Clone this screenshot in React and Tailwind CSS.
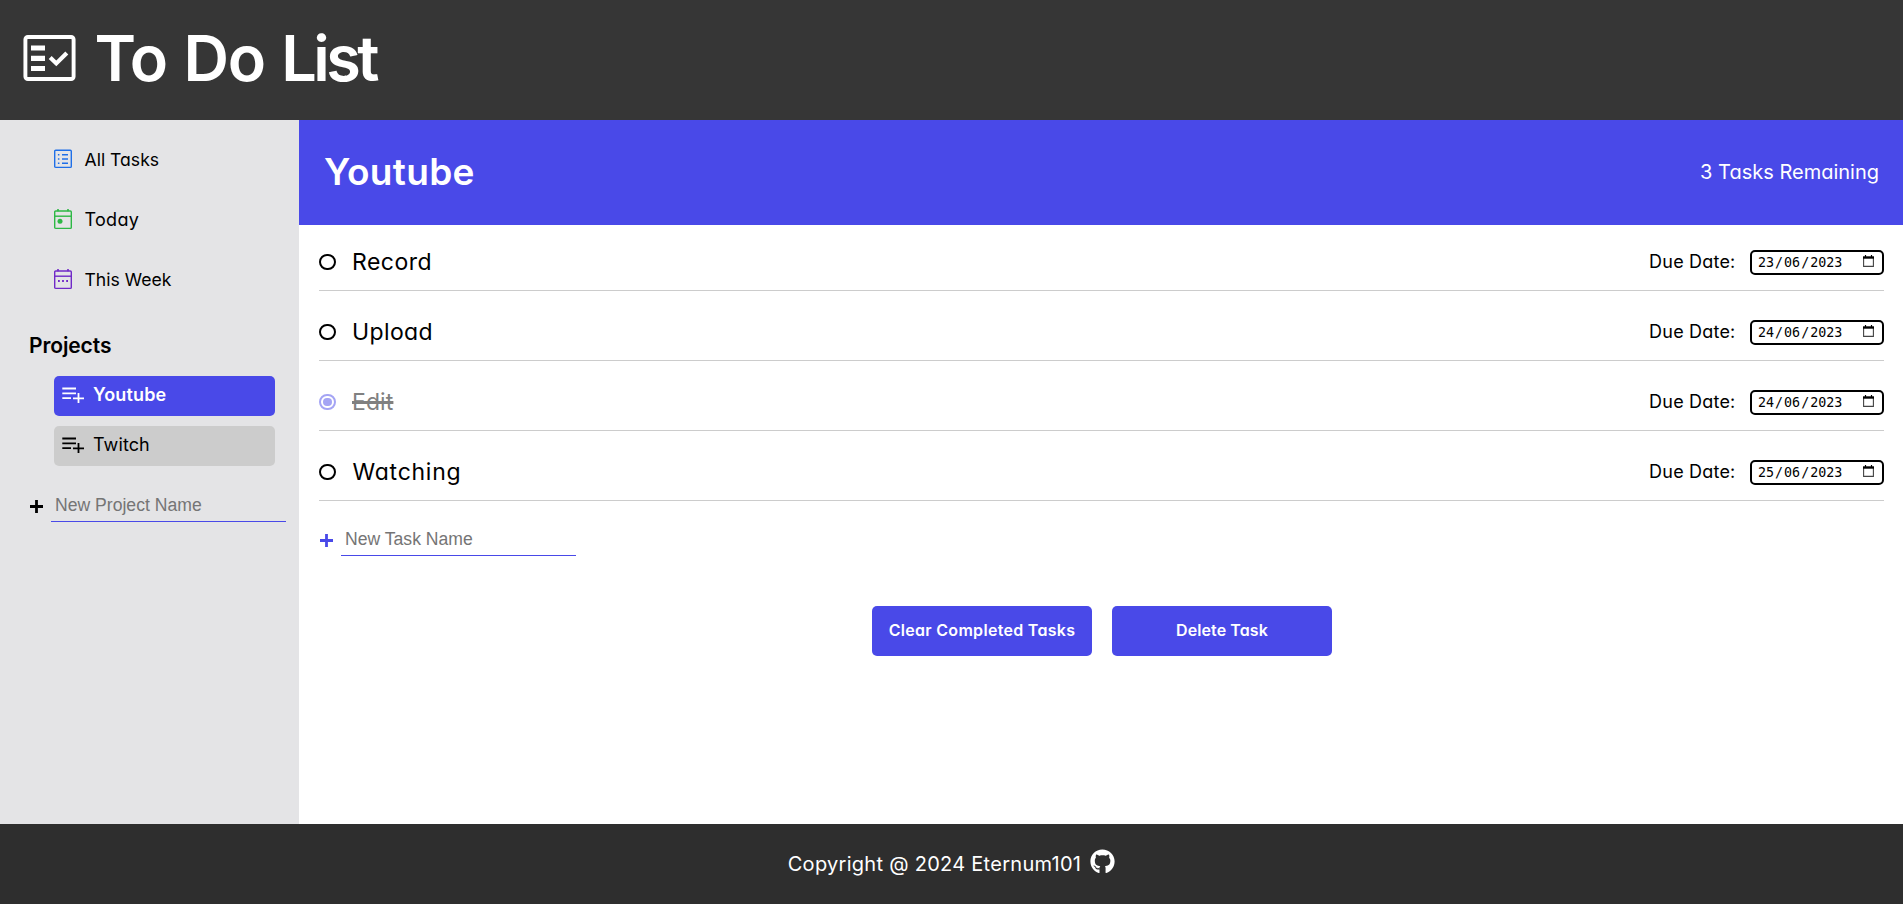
import { FaGithub } from "react-icons/fa";

function ChecklistLogo() {
  return (
    <svg width="53" height="46" viewBox="0 0 53 46" fill="none" stroke="white">
      <rect x="2.4" y="2" width="48.2" height="42" rx="2.5" strokeWidth="3.9" />
      <path d="M8 13H22M8 23.3H22M8 33.5H22" strokeWidth="5.2" />
      <path d="M27.2 22.4L33.3 28.4L43.8 17.9" strokeWidth="4.2" />
    </svg>
  );
}

function ListIcon() {
  return (
    <svg width="18" height="21" viewBox="0 0 18 21" fill="none" stroke="#1f6fe8" strokeWidth="1.4">
      <rect x="0.7" y="1.2" width="16.6" height="17.2" rx="1" />
      <path d="M3.9 5.8H5.4M3.9 10H5.4M3.9 14.2H5.4M8 5.8H14M8 10H14M8 14.2H14" />
    </svg>
  );
}

function CalendarIcon({ color, children }) {
  return (
    <svg width="18" height="21" viewBox="0 0 18 21" fill="none" stroke={color} strokeWidth="1.4">
      <rect x="0.7" y="2" width="16.6" height="17.4" rx="1" />
      <path d="M0.7 7.2H17.3" />
      <path d="M4 0V2.2M14 0V2.2" strokeWidth="1.6" />
      {children}
    </svg>
  );
}

function PlaylistIcon() {
  return (
    <svg width="22" height="16" viewBox="0 0 22 16" fill="none" stroke="currentColor" strokeWidth="1.8">
      <path d="M0.3 1.5H14M0.3 6.4H14M0.3 11.2H9M11 11.3H22M16.5 6V16" />
    </svg>
  );
}

function Plus({ className }) {
  return (
    <svg className={className} width="13" height="13" viewBox="0 0 13 13" stroke="currentColor" strokeWidth="2.8">
      <path d="M0 6.5H13M6.5 0V13" />
    </svg>
  );
}

function NavItem({ icon, label, text }) {
  return (
    <li className="flex h-[60px] items-center pl-[54px]">
      {icon}
      <span className={`mt-0.5 ml-[12.5px] leading-none ${text}`}>{label}</span>
    </li>
  );
}

function DateField({ date }) {
  const [d, m, y] = date.split("/");
  return (
    <div className="flex h-[25px] w-[134px] items-center justify-between rounded-[5px] border-2 border-black pr-[8px] pl-[5px] font-['DejaVu_Sans_Mono',monospace] text-[13.333px] leading-none">
      <div className="flex pt-px">
        <span className="px-px">{d}</span>
        <span>/</span>
        <span className="px-px">{m}</span>
        <span>/</span>
        <span className="px-px">{y}</span>
      </div>
      <svg className="mb-0.5" width="11" height="12" viewBox="0 0 11 12" fill="none" stroke="black">
        <path d="M0.6 2V11.4H10.4V2" strokeWidth="1.1" stroke="#444" />
        <path d="M0 2.5H11" strokeWidth="2.4" />
        <path d="M2.5 0V2M8.5 0V2" strokeWidth="1.2" />
      </svg>
    </div>
  );
}

function Radio({ checked }) {
  return checked ? (
    <span className="flex h-4 w-[17px] items-center justify-center rounded-full border-2 border-[#a4a4f4]">
      <span className="h-2 w-[9px] rounded-full bg-[#a4a4f4]" />
    </span>
  ) : (
    <span className="h-4 w-[17px] rounded-full border-2 border-black" />
  );
}

const tasks = [
  { name: "Record", date: "23/06/2023", style: "tracking-[0.5px] ml-4" },
  { name: "Upload", date: "24/06/2023", style: "tracking-[0.38px] ml-4" },
  { name: "Edit", date: "24/06/2023", style: "tracking-[0.1px] ml-4 text-[#808080] line-through decoration-[3px]", done: true },
  { name: "Watching", date: "25/06/2023", style: "tracking-[0.75px] ml-[16.5px]" },
];

export default function App() {
  return (
    <div className="flex h-[904px] flex-col bg-white font-['Inter',sans-serif] text-black [font-feature-settings:'cv11']">
      <header className="flex h-[120px] shrink-0 items-center bg-[#363636] pb-1 pl-[23px] text-white">
        <ChecklistLogo />
        <h1 className="ml-[18.5px] text-[63px] leading-none font-semibold tracking-[-1.3px] [word-spacing:2px]">
          To Do <span className="tracking-[-3.6px]">List</span>
        </h1>
      </header>

      <div className="flex grow">
        <aside className="w-[299px] shrink-0 bg-[#e4e4e6] pt-[9px]">
          <ul>
            <NavItem icon={<ListIcon />} label="All Tasks" text="text-[17.6px]" />
            <NavItem
              icon={
                <CalendarIcon color="#2db845">
                  <circle cx="6" cy="12.2" r="2.5" fill="#2db845" stroke="none" />
                </CalendarIcon>
              }
              label="Today"
              text="text-[18px] tracking-[0.3px]"
            />
            <NavItem
              icon={
                <CalendarIcon color="#7029c8">
                  <path d="M4 12H5.8M8.1 12H9.9M12.2 12H14" strokeWidth="1.8" />
                </CalendarIcon>
              }
              label="This Week"
              text="text-[17.6px]"
            />
          </ul>
          <h2 className="mt-[26px] ml-[29px] text-[21px] leading-[21px] font-semibold tracking-[-0.1px]">Projects</h2>
          <div className="mt-5 ml-[54px] flex w-[221px] flex-col gap-2.5">
            <div className="flex h-10 items-center rounded-[5px] bg-[#4949e8] pb-[3px] pl-2 text-white">
              <PlaylistIcon />
              <span className="ml-[9px] text-[18px] leading-none font-semibold tracking-[0.16px]">Youtube</span>
            </div>
            <div className="flex h-10 items-center rounded-[5px] bg-[#cccccc] pb-[3px] pl-2">
              <PlaylistIcon />
              <span className="ml-[9px] text-[18px] leading-none tracking-[0.1px]">Twitch</span>
            </div>
          </div>
          <div className="mt-5 ml-[30px] flex items-center">
            <Plus className="mt-[5px]" />
            <div className="ml-2 flex h-9 w-[235px] items-center border-b border-[#4949e8] pt-1 pl-[4px] font-['Liberation_Sans',sans-serif] text-[17.6px] text-[#757575]">
              New Project Name
            </div>
          </div>
        </aside>

        <main className="flex grow flex-col">
          <div className="flex h-[105px] items-center justify-between bg-[#4949e8] pr-6 pl-[25px] text-white">
            <h2 className="pb-0.5 text-[37px] leading-none font-semibold tracking-[0.3px]">Youtube</h2>
            <p className="pb-px text-[20px] leading-none">3 Tasks Remaining</p>
          </div>
          <ul className="flex flex-col gap-5 pt-4 pr-[19px] pl-5">
            {tasks.map((t) => (
              <li key={t.name} className="flex h-[50px] items-center border-b border-[#cccccc] pb-[7px]">
                <Radio checked={t.done} />
                <span className={`text-[23px] leading-none ${t.style}`}>{t.name}</span>
                <span className="mr-[14.5px] ml-auto text-[18px] leading-none tracking-[0.2px]">Due Date:</span>
                <DateField date={t.date} />
              </li>
            ))}
          </ul>
          <div className="mt-[19px] ml-[21px] flex items-center">
            <Plus className="mt-[5px] text-[#4949e8]" />
            <div className="ml-2 flex h-9 w-[235px] items-center border-b border-[#4949e8] pt-1 pl-[4px] font-['Liberation_Sans',sans-serif] text-[17.6px] text-[#757575]">
              New Task Name
            </div>
          </div>
          <div className="mt-[50px] flex justify-center gap-5 pl-0.5 text-[16px] leading-none font-semibold text-white">
            <button className="h-[50px] w-[220px] rounded-[5px] bg-[#4949e8] pb-0.5 tracking-[0.3px]">Clear Completed Tasks</button>
            <button className="h-[50px] w-[220px] rounded-[5px] bg-[#4949e8] pb-0.5 tracking-[0.1px]">Delete Task</button>
          </div>
        </main>
      </div>

      <footer className="flex h-20 shrink-0 items-center justify-center bg-[#2e2e2e] text-white">
        <span className="mr-[9px] text-[20px] leading-none tracking-[0.28px]">Copyright @ 2024 Eternum101</span>
        <FaGithub className="mb-[5px] size-[25px]" />
      </footer>
    </div>
  );
}
